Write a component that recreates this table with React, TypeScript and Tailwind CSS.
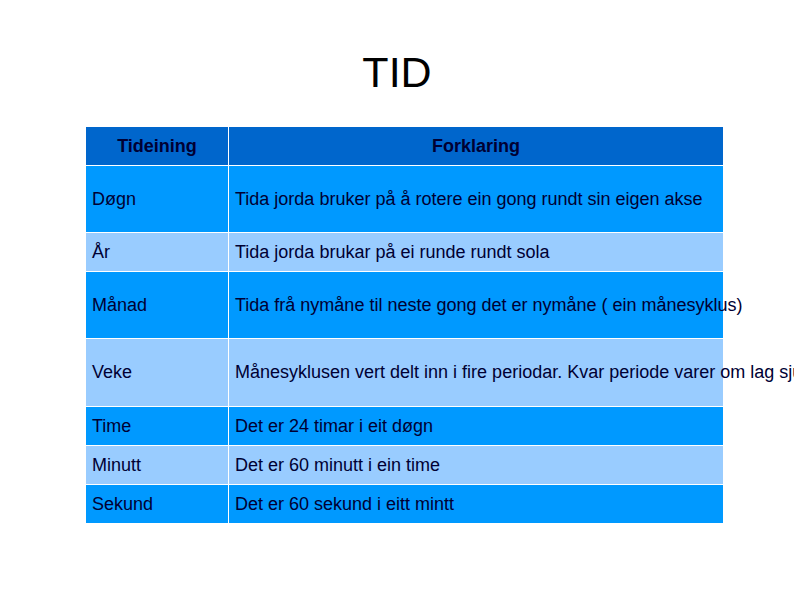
import React from "react";

const rows: { a: string; b: string; h: string; bg: string }[] = [
  { a: "Døgn", b: "Tida jorda bruker på å rotere ein gong rundt sin eigen akse", h: "h-[66px]", bg: "bg-[#0099ff]" },
  { a: "År", b: "Tida jorda brukar på ei runde rundt sola", h: "h-[38px]", bg: "bg-[#99ccff]" },
  { a: "Månad", b: "Tida frå nymåne til neste gong det er nymåne ( ein månesyklus)", h: "h-[66px]", bg: "bg-[#0099ff]" },
  { a: "Veke", b: "Månesyklusen vert delt inn i fire periodar. Kvar periode varer om lag sju dagar", h: "h-[67px]", bg: "bg-[#99ccff]" },
  { a: "Time", b: "Det er 24 timar i eit døgn", h: "h-[38px]", bg: "bg-[#0099ff]" },
  { a: "Minutt", b: "Det er 60 minutt i ein time", h: "h-[38px]", bg: "bg-[#99ccff]" },
  { a: "Sekund", b: "Det er 60 sekund i eitt mintt", h: "h-[38px]", bg: "bg-[#0099ff]" },
];

export default function App() {
  return (
    <div className="w-[794px] h-[595px] overflow-hidden bg-white font-['Liberation_Sans',Arial,sans-serif]">
      <div className="flex flex-col pt-[51px]">
        <h1 className="self-center text-[43px] leading-none text-black">TID</h1>
        <div className="self-start ml-[86px] mt-[33px] grid grid-cols-[142px_494px] gap-px text-[18px] text-[#000033]">
          <div className="h-[38px] bg-[#0066cc] flex items-center justify-center font-bold">Tideining</div>
          <div className="h-[38px] bg-[#0066cc] flex items-center justify-center font-bold">Forklaring</div>
          {rows.map((r) => (
            <React.Fragment key={r.a}>
              <div className={`${r.h} ${r.bg} flex items-center pl-[6px] whitespace-nowrap`}>{r.a}</div>
              <div className={`${r.h} ${r.bg} flex items-center pl-[6px] whitespace-nowrap overflow-visible`}>{r.b}</div>
            </React.Fragment>
          ))}
        </div>
      </div>
    </div>
  );
}
